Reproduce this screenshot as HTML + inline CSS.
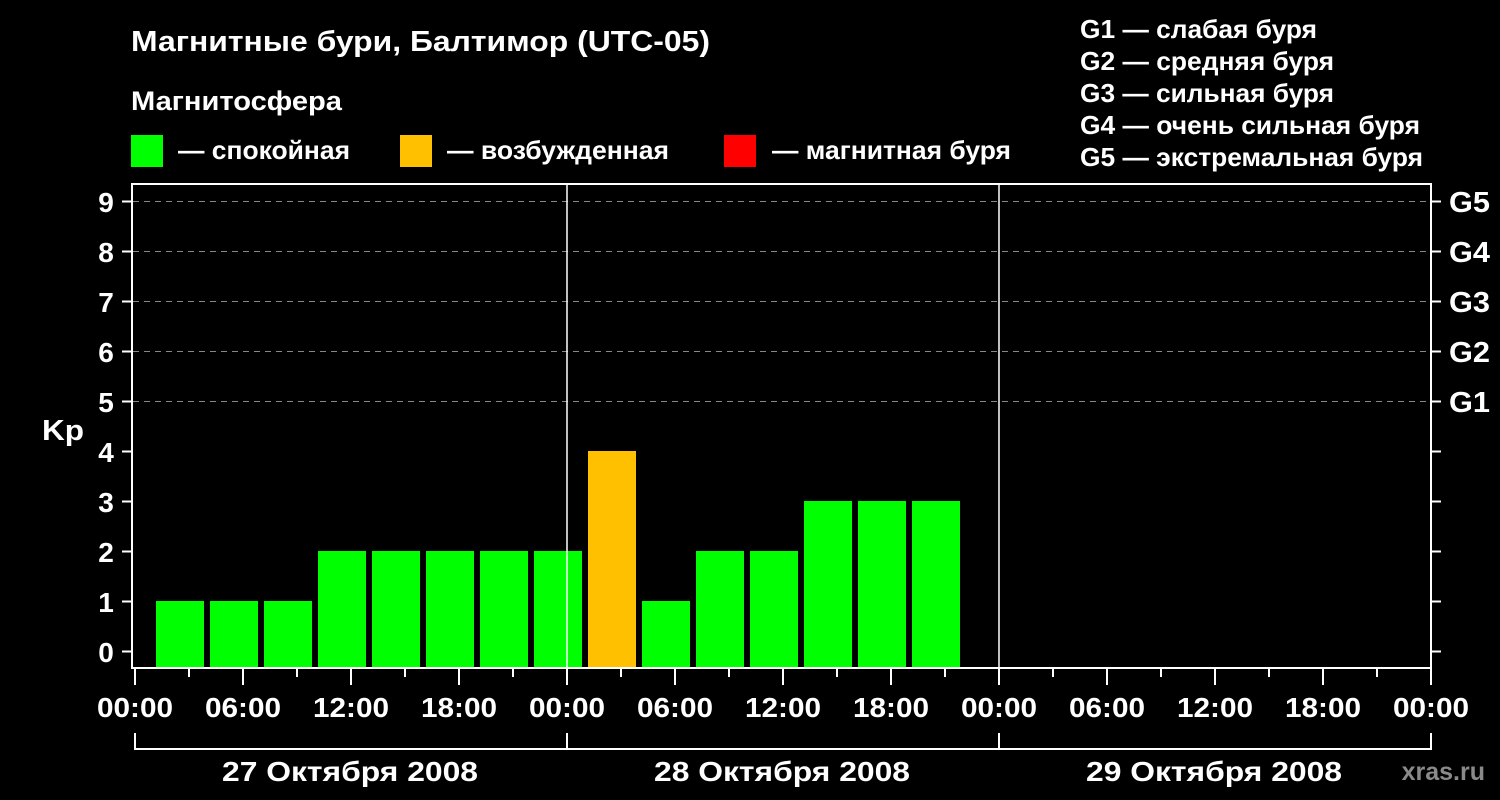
<!DOCTYPE html>
<html><head><meta charset="utf-8"><style>
html,body{margin:0;padding:0;background:#000;}
svg{display:block;font-family:"Liberation Sans",Arial,sans-serif;font-weight:bold;}
</style></head><body>
<svg width="1500" height="800" viewBox="0 0 1500 800" xmlns="http://www.w3.org/2000/svg">
<rect width="1500" height="800" fill="#000"/>
<g fill="#fff">
<text x="131" y="51" font-size="29" textLength="579" lengthAdjust="spacingAndGlyphs">Магнитные бури, Балтимор (UTC-05)</text>
<text x="131" y="110" font-size="27" textLength="211" lengthAdjust="spacingAndGlyphs">Магнитосфера</text>
</g>
<g fill="#fff" font-size="26">
<text x="178" y="159" textLength="172" lengthAdjust="spacingAndGlyphs">— спокойная</text>
<text x="447" y="159" textLength="222" lengthAdjust="spacingAndGlyphs">— возбужденная</text>
<text x="772" y="159" textLength="239" lengthAdjust="spacingAndGlyphs">— магнитная буря</text>
<text x="1080" y="38" textLength="237" lengthAdjust="spacingAndGlyphs">G1 — слабая буря</text>
<text x="1080" y="70" textLength="254" lengthAdjust="spacingAndGlyphs">G2 — средняя буря</text>
<text x="1080" y="102" textLength="254" lengthAdjust="spacingAndGlyphs">G3 — сильная буря</text>
<text x="1080" y="134" textLength="340" lengthAdjust="spacingAndGlyphs">G4 — очень сильная буря</text>
<text x="1080" y="166" textLength="343" lengthAdjust="spacingAndGlyphs">G5 — экстремальная буря</text>
</g>
<rect x="131" y="135" width="32" height="32" fill="#00ff00"/>
<rect x="400" y="135" width="32" height="32" fill="#ffc000"/>
<rect x="724" y="135" width="32" height="32" fill="#ff0000"/>

<g stroke="#888" stroke-width="1" stroke-dasharray="6,5">
<line x1="133" y1="201.5" x2="1431" y2="201.5"/>
<line x1="133" y1="251.5" x2="1431" y2="251.5"/>
<line x1="133" y1="301.5" x2="1431" y2="301.5"/>
<line x1="133" y1="351.5" x2="1431" y2="351.5"/>
<line x1="133" y1="401.5" x2="1431" y2="401.5"/>
</g>
<g fill="#00ff00">
<rect x="156" y="601" width="48" height="67"/>
<rect x="210" y="601" width="48" height="67"/>
<rect x="264" y="601" width="48" height="67"/>
<rect x="318" y="551" width="48" height="117"/>
<rect x="372" y="551" width="48" height="117"/>
<rect x="426" y="551" width="48" height="117"/>
<rect x="480" y="551" width="48" height="117"/>
<rect x="534" y="551" width="48" height="117"/>
<rect x="642" y="601" width="48" height="67"/>
<rect x="696" y="551" width="48" height="117"/>
<rect x="750" y="551" width="48" height="117"/>
<rect x="804" y="501" width="48" height="167"/>
<rect x="858" y="501" width="48" height="167"/>
<rect x="912" y="501" width="48" height="167"/>
</g>
<rect x="588" y="451" width="48" height="217" fill="#ffc000"/>

<g stroke="#fff" stroke-width="2" fill="none">
<rect x="132" y="184" width="1299" height="484"/>
</g>
<g stroke="#fff" stroke-width="1.5">
<line x1="567" y1="183" x2="567" y2="668"/>
<line x1="999" y1="183" x2="999" y2="668"/>
</g>
<g stroke="#fff" stroke-width="2">
<line x1="122" y1="201.5" x2="132" y2="201.5"/><line x1="122" y1="251.5" x2="132" y2="251.5"/>
<line x1="122" y1="301.5" x2="132" y2="301.5"/><line x1="122" y1="351.5" x2="132" y2="351.5"/>
<line x1="122" y1="401.5" x2="132" y2="401.5"/><line x1="122" y1="451.5" x2="132" y2="451.5"/>
<line x1="122" y1="501.5" x2="132" y2="501.5"/><line x1="122" y1="551.5" x2="132" y2="551.5"/>
<line x1="122" y1="601.5" x2="132" y2="601.5"/><line x1="122" y1="651.5" x2="132" y2="651.5"/>
<line x1="1431" y1="201.5" x2="1441" y2="201.5"/><line x1="1431" y1="251.5" x2="1441" y2="251.5"/>
<line x1="1431" y1="301.5" x2="1441" y2="301.5"/><line x1="1431" y1="351.5" x2="1441" y2="351.5"/>
<line x1="1431" y1="401.5" x2="1441" y2="401.5"/><line x1="1431" y1="451.5" x2="1441" y2="451.5"/>
<line x1="1431" y1="501.5" x2="1441" y2="501.5"/><line x1="1431" y1="551.5" x2="1441" y2="551.5"/>
<line x1="1431" y1="601.5" x2="1441" y2="601.5"/><line x1="1431" y1="651.5" x2="1441" y2="651.5"/>
</g>
<g fill="#fff" font-size="28" text-anchor="middle">
<text x="106" y="212">9</text><text x="106" y="262">8</text><text x="106" y="312">7</text>
<text x="106" y="362">6</text><text x="106" y="412">5</text><text x="106" y="462">4</text>
<text x="106" y="512">3</text><text x="106" y="562">2</text><text x="106" y="612">1</text>
<text x="106" y="662">0</text>
</g>
<g fill="#fff" font-size="29">
<text x="1449" y="212" textLength="41" lengthAdjust="spacingAndGlyphs">G5</text>
<text x="1449" y="262" textLength="41" lengthAdjust="spacingAndGlyphs">G4</text>
<text x="1449" y="312" textLength="41" lengthAdjust="spacingAndGlyphs">G3</text>
<text x="1449" y="362" textLength="41" lengthAdjust="spacingAndGlyphs">G2</text>
<text x="1449" y="412" textLength="41" lengthAdjust="spacingAndGlyphs">G1</text>
<text x="42" y="440" textLength="42" lengthAdjust="spacingAndGlyphs">Kp</text>
</g>
<g stroke="#fff" stroke-width="2">
<line x1="135" y1="669" x2="135" y2="685"/><line x1="189" y1="669" x2="189" y2="677"/>
<line x1="243" y1="669" x2="243" y2="685"/><line x1="297" y1="669" x2="297" y2="677"/>
<line x1="351" y1="669" x2="351" y2="685"/><line x1="405" y1="669" x2="405" y2="677"/>
<line x1="459" y1="669" x2="459" y2="685"/><line x1="513" y1="669" x2="513" y2="677"/>
<line x1="567" y1="669" x2="567" y2="685"/><line x1="621" y1="669" x2="621" y2="677"/>
<line x1="675" y1="669" x2="675" y2="685"/><line x1="729" y1="669" x2="729" y2="677"/>
<line x1="783" y1="669" x2="783" y2="685"/><line x1="837" y1="669" x2="837" y2="677"/>
<line x1="891" y1="669" x2="891" y2="685"/><line x1="945" y1="669" x2="945" y2="677"/>
<line x1="999" y1="669" x2="999" y2="685"/><line x1="1053" y1="669" x2="1053" y2="677"/>
<line x1="1107" y1="669" x2="1107" y2="685"/><line x1="1161" y1="669" x2="1161" y2="677"/>
<line x1="1215" y1="669" x2="1215" y2="685"/><line x1="1269" y1="669" x2="1269" y2="677"/>
<line x1="1323" y1="669" x2="1323" y2="685"/><line x1="1377" y1="669" x2="1377" y2="677"/>
<line x1="1431" y1="669" x2="1431" y2="685"/>
<line x1="134" y1="749" x2="1432" y2="749"/>
<line x1="135" y1="733" x2="135" y2="750"/><line x1="567" y1="733" x2="567" y2="750"/>
<line x1="999" y1="733" x2="999" y2="750"/><line x1="1431" y1="733" x2="1431" y2="750"/>
</g>
<g fill="#fff" font-size="28" text-anchor="middle">
<text x="135" y="717" textLength="76" lengthAdjust="spacingAndGlyphs">00:00</text>
<text x="243" y="717" textLength="76" lengthAdjust="spacingAndGlyphs">06:00</text>
<text x="351" y="717" textLength="76" lengthAdjust="spacingAndGlyphs">12:00</text>
<text x="459" y="717" textLength="76" lengthAdjust="spacingAndGlyphs">18:00</text>
<text x="567" y="717" textLength="76" lengthAdjust="spacingAndGlyphs">00:00</text>
<text x="675" y="717" textLength="76" lengthAdjust="spacingAndGlyphs">06:00</text>
<text x="783" y="717" textLength="76" lengthAdjust="spacingAndGlyphs">12:00</text>
<text x="891" y="717" textLength="76" lengthAdjust="spacingAndGlyphs">18:00</text>
<text x="999" y="717" textLength="76" lengthAdjust="spacingAndGlyphs">00:00</text>
<text x="1107" y="717" textLength="76" lengthAdjust="spacingAndGlyphs">06:00</text>
<text x="1215" y="717" textLength="76" lengthAdjust="spacingAndGlyphs">12:00</text>
<text x="1323" y="717" textLength="76" lengthAdjust="spacingAndGlyphs">18:00</text>
<text x="1431" y="717" textLength="76" lengthAdjust="spacingAndGlyphs">00:00</text>
<text x="350" y="781" textLength="256" lengthAdjust="spacingAndGlyphs">27 Октября 2008</text>
<text x="782" y="781" textLength="256" lengthAdjust="spacingAndGlyphs">28 Октября 2008</text>
<text x="1214" y="781" textLength="256" lengthAdjust="spacingAndGlyphs">29 Октября 2008</text>
</g>
<text x="1485" y="780" fill="#8a8a8a" font-size="25" text-anchor="end">xras.ru</text>
</svg>
</body></html>
